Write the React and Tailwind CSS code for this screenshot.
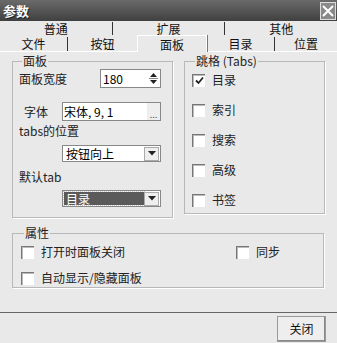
const font = { fontFamily: '"Noto Sans CJK SC", "Liberation Sans", sans-serif' };

function Check({ checked, label }) {
  return (
    <label className="flex items-center gap-[7px] text-[12px] leading-[14px] text-[#222]">
      <span className="flex h-[13px] w-[13px] items-center justify-center border-l border-t border-[#777] bg-white shadow-[inset_1px_1px_0_#bbb]">
        {checked && (
          <svg width="9" height="9" viewBox="0 0 9 9">
            <path d="M1 4.5 L3.5 7 L8 1.5" fill="none" stroke="#222" strokeWidth="1.8" />
          </svg>
        )}
      </span>
      {label}
    </label>
  );
}

function Arrow() {
  return (
    <span className="flex h-[14px] w-[15px] items-center justify-center border border-[#aaa] bg-[#eee]">
      <svg width="8" height="5" viewBox="0 0 8 5">
        <path d="M0 0 H8 L4 4.5 Z" fill="#222" />
      </svg>
    </span>
  );
}

function Group({ title, className, children }) {
  return (
    <fieldset className={`border border-[#b8b8b8] shadow-[1px_1px_0_#fff] ${className}`}>
      <legend className="ml-[3px] px-[1px] text-[12px] leading-[14px] text-[#222]">{title}</legend>
      {children}
    </fieldset>
  );
}

export default function App() {
  return (
    <div className="flex h-[343px] w-[337px] flex-col overflow-hidden bg-[#e9e9e9]" style={font}>
      <div className="flex h-[21px] items-center justify-between bg-[linear-gradient(180deg,#6a6a6a,#404040)] pl-[3px]">
        <span className="text-[13px] font-bold text-white [text-shadow:1px_1px_0_#222]">参数</span>
        <span className="mr-[1px] flex h-[18px] w-[16px] items-center justify-center border border-[#ddd] bg-[#8a8a8a]">
          <svg width="12" height="12" viewBox="0 0 12 12">
            <path d="M1 1 L11 11 M11 1 L1 11" stroke="#fff" strokeWidth="2" />
          </svg>
        </span>
      </div>

      <div className="flex h-[15px] items-center text-[12px] leading-[13px] text-[#111]">
        {['普通', '扩展', '其他'].map((t, i) => (
          <div key={t} className={`flex flex-1 justify-center ${i < 2 ? 'border-r border-[#333]' : ''}`}>{t}</div>
        ))}
      </div>
      <div className="flex h-[16px] items-end border-b border-white text-[12px] leading-[13px] text-[#111]">
        <div className="flex w-[68px] justify-center border-r border-[#333] pb-[1px]">文件</div>
        <div className="flex w-[69px] justify-center pb-[1px]">按钮</div>
        <div className="-mb-[1px] flex h-[17px] w-[70px] items-center justify-center border-l border-r border-t border-[#fff] bg-[#e9e9e9] shadow-[1px_0_0_#777]">面板</div>
        <div className="flex w-[68px] justify-center border-r border-[#333] pb-[1px]">目录</div>
        <div className="flex flex-1 justify-center pb-[1px]">位置</div>
      </div>

      <div className="flex flex-col px-[12px] pt-[2px]">
        <div className="flex gap-[11px]">
          <Group title="面板" className="h-[164px] w-[160px] pl-[6px] pr-[11px]">
            <div className="mt-[1px] flex items-center justify-between">
              <span className="text-[12px] text-[#222]">面板宽度</span>
              <div className="flex h-[19px] w-[61px] items-center justify-between border border-[#888] bg-white pl-[2px] pr-[2px] text-[12px]">
                <span>180</span>
                <svg width="9" height="13" viewBox="0 0 9 13">
                  <path d="M4.5 1 L8 5 H1 Z M1 8 H8 L4.5 12 Z" fill="#222" />
                  <path d="M0 6.5 H9" stroke="#888" />
                </svg>
              </div>
            </div>
            <div className="mt-[14px] flex items-center gap-[14px] pl-[5px]">
              <span className="text-[12px] text-[#222]">字体</span>
              <div className="flex h-[19px] w-[99px] items-center justify-between border border-[#888] bg-white pl-[1px] text-[12px]">
                <span>宋体, 9, 1</span>
                <span className="flex h-[17px] w-[13px] items-end justify-center bg-[#eee] text-[9px] leading-[10px] text-[#555]">...</span>
              </div>
            </div>
            <div className="mt-[2px] text-[12px] leading-[16px] text-[#222]">tabs的位置</div>
            <div className="ml-[43px] mt-[6px] flex h-[17px] w-[99px] items-center justify-between border border-[#888] bg-white pl-[3px] pr-[1px] text-[12px]">
              <span>按钮向上</span>
              <Arrow />
            </div>
            <div className="mt-[7px] text-[12px] leading-[16px] text-[#222]">默认tab</div>
            <div className="ml-[43px] mt-[5px] flex h-[17px] w-[99px] items-center justify-between border border-[#888] bg-white p-[1px] text-[12px]">
              <span className="flex h-full flex-1 items-center bg-[#5a5a5a] pl-[2px] text-white outline-1 outline-dotted outline-[#ccc]">目录</span>
              <Arrow />
            </div>
          </Group>

          <Group title="跳格 (Tabs)" className="h-[160px] w-[141px] pl-[7px]">
            <div className="mt-[5px] flex flex-col gap-[16px]">
              <Check checked label="目录" />
              <Check label="索引" />
              <Check label="搜索" />
              <Check label="高级" />
              <Check label="书签" />
            </div>
          </Group>
        </div>

        <Group title="属性" className="mt-[8px] h-[62px] w-[312px] pl-[8px]">
          <div className="mt-[5px] flex">
            <div className="w-[215px]"><Check label="打开时面板关闭" /></div>
            <Check label="同步" />
          </div>
          <div className="mt-[12px]"><Check label="自动显示/隐藏面板" /></div>
        </Group>
      </div>

      <div className="mt-auto flex h-[31px] justify-end border-t border-[#666] pr-[11px] pt-[3px]">
        <div className="flex h-[26px] w-[49px] items-center justify-center border border-[#999] bg-[#eee] text-[12px] text-[#111] shadow-[inset_-1px_-1px_0_#888]">关闭</div>
      </div>
    </div>
  );
}
